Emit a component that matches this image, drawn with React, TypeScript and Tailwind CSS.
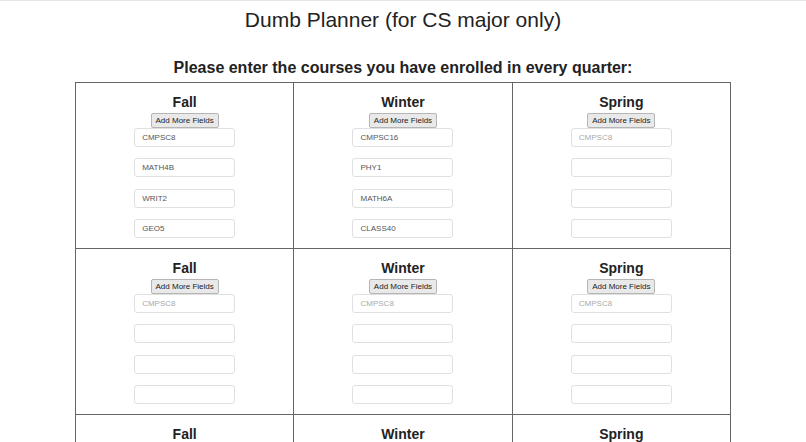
import React from "react";

type Quarter = {
  name: string;
  values: string[];
};

const rows: Quarter[][] = [
  [
    { name: "Fall", values: ["CMPSC8", "MATH4B", "WRIT2", "GEO5"] },
    { name: "Winter", values: ["CMPSC16", "PHY1", "MATH6A", "CLASS40"] },
    { name: "Spring", values: [] },
  ],
  [
    { name: "Fall", values: [] },
    { name: "Winter", values: [] },
    { name: "Spring", values: [] },
  ],
  [
    { name: "Fall", values: [] },
    { name: "Winter", values: [] },
    { name: "Spring", values: [] },
  ],
];

function QuarterCell({ quarter }: { quarter: Quarter }) {
  const fields = [0, 1, 2, 3];
  return (
    <div className="flex flex-col items-center border-b border-r border-[#666] pb-[10px] pt-[10px]">
      <h3 className="text-[14px] font-semibold leading-[18px] text-[#222]">{quarter.name}</h3>
      <button
        type="button"
        className="mt-[2px] h-[15px] rounded-[2px] border border-[#b5b5b5] bg-[#e9e9e9] px-[4px] text-[8px] leading-[13px] text-[#222]"
      >
        Add More Fields
      </button>
      <div className="flex flex-col">
        {fields.map((i) => (
          <input
            key={i}
            readOnly
            value={quarter.values[i] ?? ""}
            placeholder={i === 0 ? "CMPSC8" : ""}
            className="mb-[11.33px] h-[19px] w-[101px] rounded-[3px] border border-[#e0e0e0] bg-white px-[7px] text-[8px] text-[#555] outline-none placeholder:text-[#aaa] last:mb-0"
          />
        ))}
      </div>
    </div>
  );
}

export default function App() {
  return (
    <div
      className="min-h-screen border-t border-[#e6e6e6] bg-white text-[#222]"
      style={{ fontFamily: '"Liberation Sans", Arial, sans-serif' }}
    >
      <h1 className="pt-[7px] text-center text-[21px] leading-[24px]">Dumb Planner (for CS major only)</h1>
      <h2 className="mt-[26px] text-center text-[16px] font-bold leading-[20px]">
        Please enter the courses you have enrolled in every quarter:
      </h2>
      <div className="mx-auto mt-[4px] grid w-[656px] grid-cols-3 border-l border-t border-[#666]">
        {rows.flat().map((q, idx) => (
          <QuarterCell key={idx} quarter={q} />
        ))}
      </div>
    </div>
  );
}
